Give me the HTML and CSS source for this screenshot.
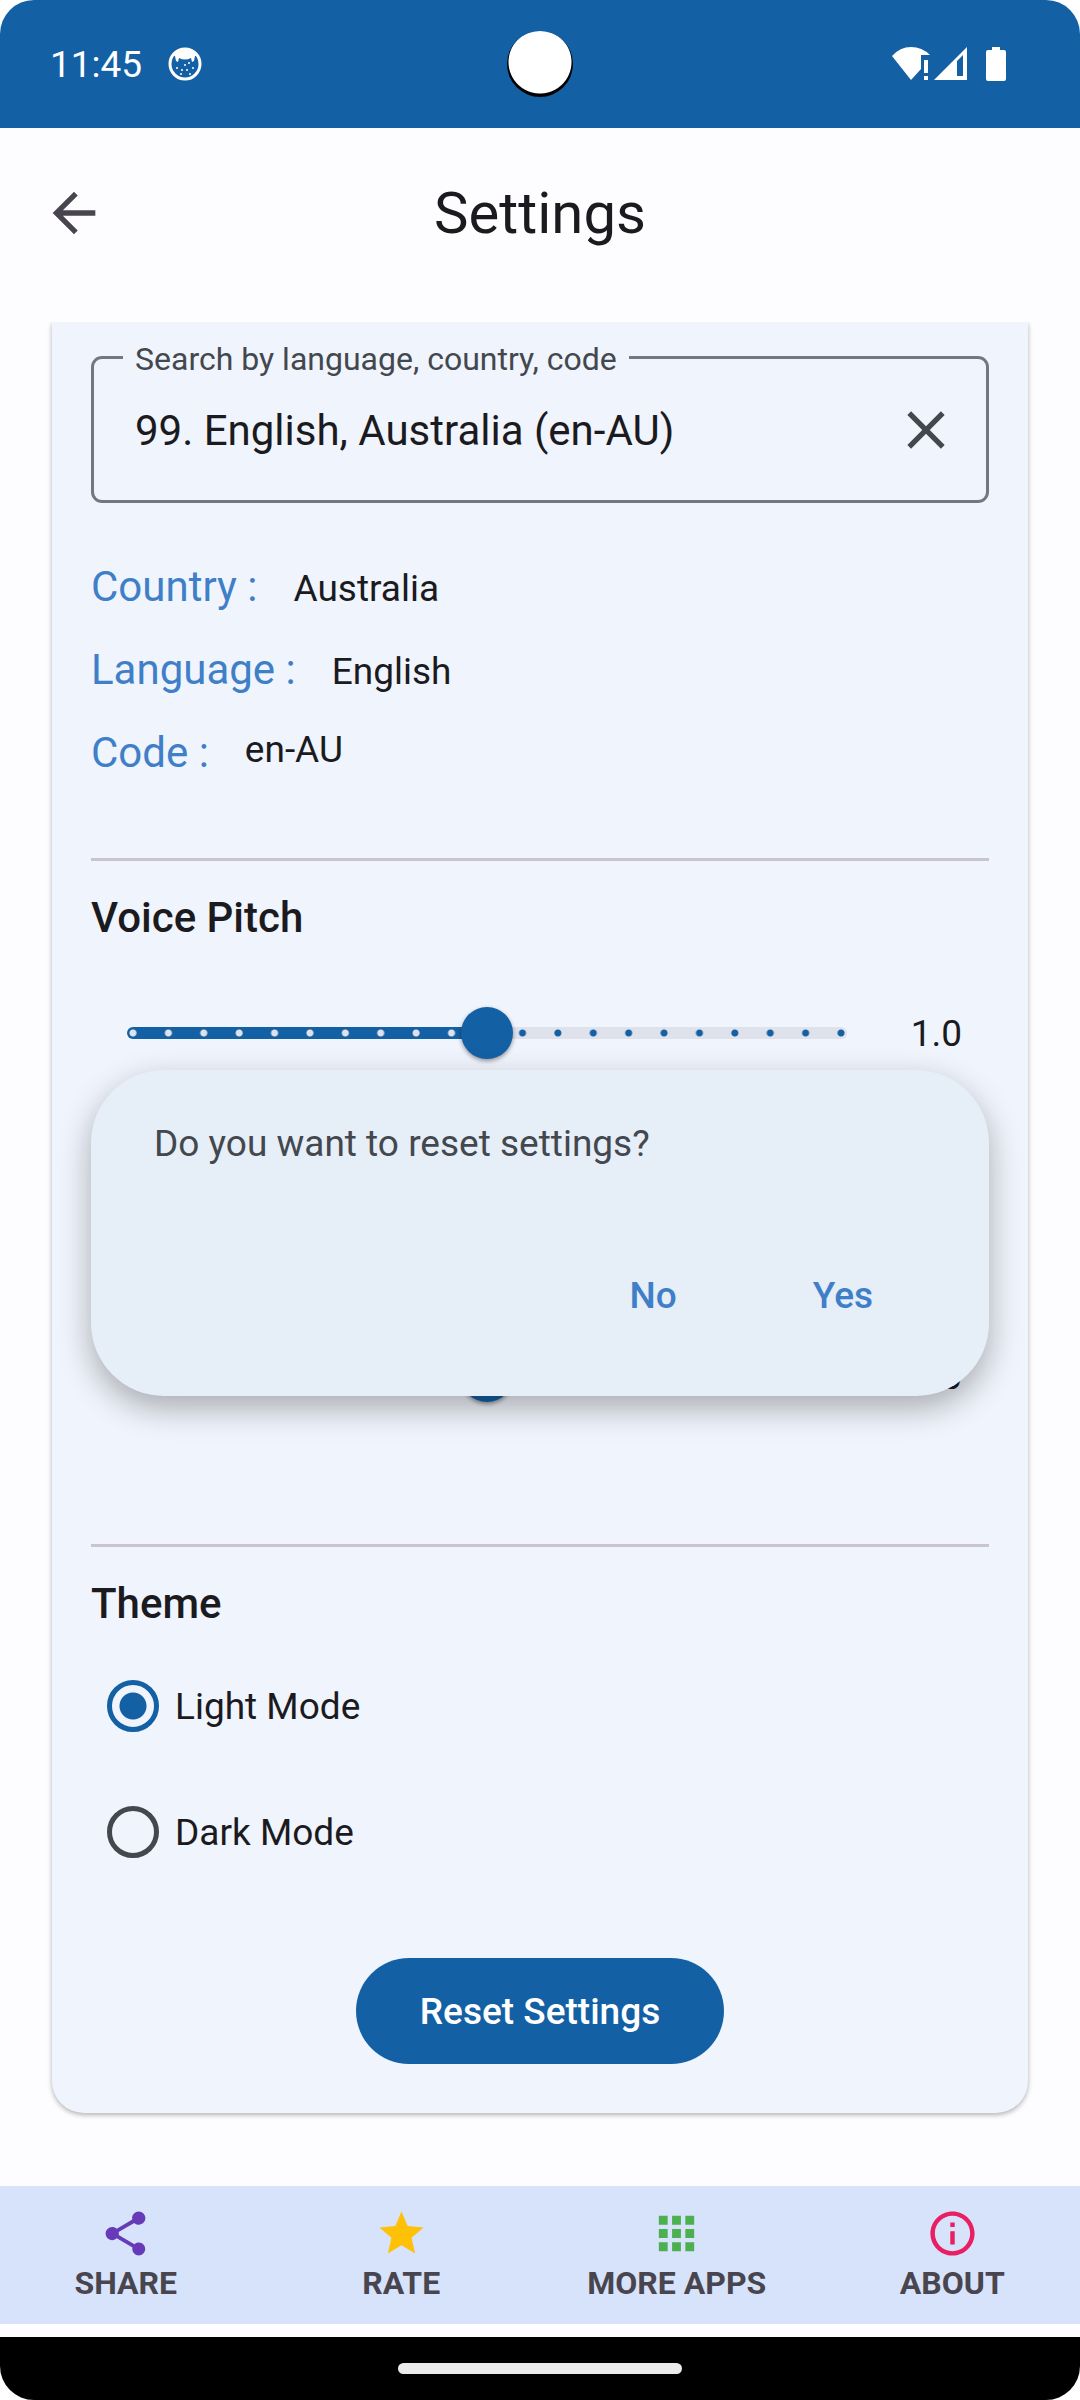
FILE: index.html
```html
<!DOCTYPE html>
<html lang="en">
<head>
  <meta charset="UTF-8" />
  <meta name="viewport" content="width=device-width, initial-scale=1.0" />
  <title>Settings</title>
  <link rel="stylesheet" href="styles.css">
</head>
<body>
  <div class="screen">
    <div class="status-bar">
      <div class="status-left">
        <span>11:45</span>
        <svg class="cat-icon" viewBox="0 0 34 34" aria-hidden="true">
          <circle cx="17" cy="17" r="15" fill="none" stroke="#fff" stroke-width="3"/>
          <path d="M4 8Q9 1 17 1T30 8L27 9 26 14 24 15 23 11Q17 14 11 11L10 15 8 14 7 9z" fill="#fff"/>
          <g fill="#fff">
            <circle cx="9" cy="21" r="1"/><circle cx="14" cy="23" r="1"/><circle cx="19" cy="23" r="1"/>
            <circle cx="25" cy="21" r="1"/><circle cx="17" cy="18" r="1"/><circle cx="22" cy="27" r="1"/>
            <circle cx="13" cy="27" r="1"/><circle cx="21" cy="16" r="1"/>
          </g>
        </svg>
      </div>
      <div class="camera"></div>
      <div class="status-right">
        <svg class="status-icons" viewBox="0 0 114 34" fill="#fff" aria-hidden="true">
          <path d="M19 33L0 9Q8 0 19 0T38 8H29V22z"/>
          <path d="M32 13h4v13h-4zM32 29h4v4h-4z"/>
          <path fill-rule="evenodd" d="M42 33L75 0V33zM65 14V29H71V8z"/>
          <path d="M100 0h8v3h4q2 0 2 2v27q0 2-2 2H96q-2 0-2-2V5q0-2 2-2h4z"/>
        </svg>
      </div>
    </div>

    <div class="app">
      <header class="app-bar">
        <button class="icon-btn" type="button" aria-label="Back">
          <svg viewBox="0 0 24 24" fill="#49454f"><path d="M20 11H7.83l5.59-5.59L12 4l-8 8 8 8 1.41-1.41L7.83 13H20z"/></svg>
        </button>
        <h1>Settings</h1>
      </header>

      <main class="content">
        <div class="card">
          <fieldset class="search-field">
            <legend><label for="search">Search by language, country, code</label></legend>
            <div class="search-row">
              <input type="text" id="search" value="99. English, Australia (en-AU)">
              <button class="icon-btn" type="button" aria-label="Clear">
                <svg viewBox="0 0 24 24" fill="#43474e"><path d="M19 6.41L17.59 5 12 10.59 6.41 5 5 6.41 10.59 12 5 17.59 6.41 19 12 13.41 17.59 19 19 17.59 13.41 12z"/></svg>
              </button>
            </div>
          </fieldset>

          <dl class="details">
            <div class="detail"><dt>Country :</dt><dd>Australia</dd></div>
            <div class="detail"><dt>Language :</dt><dd>English</dd></div>
            <div class="detail detail-top"><dt>Code :</dt><dd>en-AU</dd></div>
          </dl>

          <section class="section">
            <h2><label for="pitch">Voice Pitch</label></h2>
            <div class="slider-row">
              <div class="slider"><input type="range" id="pitch" min="0" max="2" step="0.1" value="1"></div>
              <output for="pitch">1.0</output>
            </div>
          </section>

          <section class="section">
            <h2><label for="speed">Voice Speed</label></h2>
            <div class="slider-row">
              <div class="slider"><input type="range" id="speed" min="0" max="2" step="0.1" value="1"></div>
              <output for="speed">1.0</output>
            </div>
          </section>

          <section class="section theme">
            <h2>Theme</h2>
            <label class="radio"><input type="radio" name="theme" checked> Light Mode</label>
            <label class="radio"><input type="radio" name="theme"> Dark Mode</label>
          </section>

          <button class="reset-btn" type="button">Reset Settings</button>
        </div>
      </main>

      <nav class="bottom-nav">
        <a href="#">
          <svg viewBox="0 0 24 24" fill="#673ab7"><path d="M18 16.08c-.76 0-1.44.3-1.96.77L8.91 12.7c.05-.23.09-.46.09-.7s-.04-.47-.09-.7l7.05-4.11c.54.5 1.25.81 2.04.81 1.66 0 3-1.34 3-3s-1.34-3-3-3-3 1.34-3 3c0 .24.04.47.09.7L8.04 9.81C7.5 9.31 6.79 9 6 9c-1.66 0-3 1.34-3 3s1.34 3 3 3c.79 0 1.5-.31 2.04-.81l7.12 4.16c-.05.21-.08.43-.08.65 0 1.61 1.31 2.92 2.92 2.92s2.92-1.31 2.92-2.92-1.31-2.92-2.92-2.92z"/></svg>
          SHARE
        </a>
        <a href="#">
          <svg viewBox="0 0 24 24" fill="#ffc107"><path d="M12 17.27L18.18 21l-1.64-7.03L22 9.24l-7.19-.61L12 2 9.19 8.63 2 9.24l5.46 4.73L5.82 21z"/></svg>
          RATE
        </a>
        <a href="#">
          <svg viewBox="0 0 24 24" fill="#4caf50"><path d="M4 8h4V4H4v4zm6 12h4v-4h-4v4zm-6 0h4v-4H4v4zm0-6h4v-4H4v4zm6 0h4v-4h-4v4zm6-10v4h4V4h-4zm-6 4h4V4h-4v4zm6 6h4v-4h-4v4zm0 6h4v-4h-4v4z"/></svg>
          MORE APPS
        </a>
        <a href="#">
          <svg viewBox="0 0 24 24" fill="#e91e63"><path d="M11 7h2v2h-2zm0 4h2v6h-2zm1-9C6.48 2 2 6.48 2 12s4.48 10 10 10 10-4.48 10-10S17.52 2 12 2zm0 18c-4.41 0-8-3.59-8-8s3.59-8 8-8 8 3.59 8 8-3.59 8-8 8z"/></svg>
          ABOUT
        </a>
      </nav>

      <div class="overlay">
        <div class="dialog" role="alertdialog" aria-labelledby="dialogText">
          <p id="dialogText">Do you want to reset settings?</p>
          <div class="dialog-actions">
            <button type="button">No</button>
            <button type="button">Yes</button>
          </div>
        </div>
      </div>
    </div>

    <div class="gesture-bar"><span class="pill"></span></div>
  </div>
</body>
</html>
```
FILE: styles.css
```css
:root {
  --primary: #1460a5;
  --link: #3f7fc8;
  --bg: #fdfdff;
  --card-bg: #f0f4fc;
  --dialog-bg: #e6eef8;
  --nav-bg: #d7e3fa;
  --track: #dfe2eb;
  --text: #1b1b1f;
  --text-muted: #43474e;
  --outline: #74777f;
  --divider: #cac4d0;
}
* {
  box-sizing: border-box;
  margin: 0;
  padding: 0;
  font-family: Roboto, sans-serif;
}
body {
  background: #fff;
  color: var(--text);
  font-size: 37px;
  line-height: 43px;
}
button, input {
  font-size: inherit;
  line-height: inherit;
  color: inherit;
  border: none;
  background: none;
}
button {
  cursor: pointer;
}
.screen {
  display: flex;
  flex-direction: column;
  min-height: 100vh;
  border-radius: 34px;
  overflow: hidden;
}

/* status bar */
.status-bar {
  display: grid;
  grid-template-columns: 1fr auto 1fr;
  align-items: center;
  height: 128px;
  padding: 0 50px;
  background: var(--primary);
  color: #fff;
}
.status-left {
  display: flex;
  align-items: center;
  gap: 26px;
}
.status-right {
  display: flex;
  justify-content: flex-end;
  padding-right: 24px;
}
.cat-icon {
  width: 34px;
  height: 34px;
}
.camera {
  width: 66px;
  height: 66px;
  border-radius: 50%;
  background: radial-gradient(circle at 33px 31px, #fff 31px, #000 32px);
}
.status-icons {
  width: 114px;
  height: 34px;
}

/* app */
.app {
  position: relative;
  flex: 1;
  display: flex;
  flex-direction: column;
  padding-bottom: 13px;
  background: var(--bg);
}
.app-bar {
  display: grid;
  grid-template-columns: 64px 1fr 64px;
  align-items: center;
  height: 168px;
  margin-bottom: 26px;
  padding: 2px 42px 0;
}
.app-bar h1 {
  font-size: 58px;
  font-weight: 400;
  line-height: 72px;
  text-align: center;
}
.icon-btn {
  flex: none;
  width: 64px;
  height: 64px;
}
.icon-btn svg {
  display: block;
  width: 64px;
  height: 64px;
}
.content {
  flex: 1;
  padding: 0 52px 73px;
  overflow: hidden;
}
.card {
  display: flex;
  flex-direction: column;
  padding: 15px 39px 49px;
  border-radius: 0 0 32px 32px;
  background: var(--card-bg);
  box-shadow: 0 2px 5px rgba(0, 0, 0, 0.3);
}

/* search */
.search-field {
  min-width: 0;
  padding: 20px 28px 38px 29px;
  border: 3px solid var(--outline);
  border-radius: 11px;
}
.search-field legend {
  padding: 4px 12px 0;
  font-size: 32px;
  line-height: 37px;
  color: var(--text-muted);
}
.search-row {
  display: flex;
  align-items: center;
  padding-left: 12px;
}
.search-row input {
  flex: 1;
  min-width: 0;
  padding-top: 2px;
  font-size: 42px;
  line-height: 50px;
  outline: none;
}

.details {
  display: flex;
  flex-direction: column;
  gap: 33px;
  margin: 59px 0 80px;
}
.detail {
  display: flex;
  align-items: baseline;
  gap: 36px;
}
.detail-top {
  align-items: flex-start;
}
.detail dt {
  font-size: 42px;
  line-height: 50px;
  color: var(--link);
}

/* sections */
.section {
  padding: 32px 0 142px;
  border-top: 3px solid var(--divider);
}
.section h2 {
  font-size: 42px;
  font-weight: 500;
  line-height: 50px;
}
.slider-row {
  display: flex;
  align-items: center;
  margin-top: 64px;
  padding: 0 27px 0 16px;
}
.slider-row output {
  width: 95px;
  text-align: right;
}
.slider {
  position: relative;
  flex: 1;
  height: 52px;
}
/* filled and empty halves of the track, with tick dots */
.slider::before,
.slider::after {
  content: "";
  position: absolute;
  top: 20px;
  height: 12px;
  background-size: calc((100% - 6px) / 10) 100%;
}
.slider::before {
  left: 20px;
  right: 50%;
  border-radius: 6px 0 0 6px;
  background-color: var(--primary);
  background-image: radial-gradient(circle at 6px 6px, var(--track) 3px, transparent 4px);
}
.slider::after {
  left: 50%;
  right: 20px;
  border-radius: 0 6px 6px 0;
  background-color: var(--track);
  background-image: radial-gradient(circle at calc(100% - 6px) 6px, var(--primary) 3px, transparent 4px);
  background-position: right;
}
.slider input {
  position: relative;
  z-index: 1;
  display: block;
  width: 100%;
  height: 52px;
  appearance: none;
  -webkit-appearance: none;
}
.slider input::-webkit-slider-thumb {
  -webkit-appearance: none;
  width: 52px;
  height: 52px;
  border-radius: 50%;
  background: var(--primary);
  box-shadow: 0 2px 4px rgba(0, 0, 0, 0.4);
}

.theme {
  padding-bottom: 63px;
}
.theme h2 {
  margin-bottom: 14px;
}
.radio {
  display: flex;
  align-items: center;
  gap: 16px;
  height: 126px;
  padding-left: 16px;
}
.radio input {
  width: 52px;
  height: 52px;
  appearance: none;
  -webkit-appearance: none;
  border: 5px solid var(--text-muted);
  border-radius: 50%;
}
.radio input:checked {
  border-color: var(--primary);
  background: radial-gradient(circle, var(--primary) 13px, transparent 14px);
}
.reset-btn {
  align-self: center;
  height: 106px;
  padding: 0 64px;
  border-radius: 53px;
  background: var(--primary);
  color: #fff;
  font-weight: 500;
}

/* bottom nav */
.bottom-nav {
  display: grid;
  grid-template-columns: repeat(4, 1fr);
  column-gap: 24px;
  padding: 21px 2px 22px 0;
  background: var(--nav-bg);
}
.bottom-nav a {
  display: flex;
  flex-direction: column;
  align-items: center;
  gap: 4px;
  font-size: 32px;
  font-weight: 700;
  line-height: 38px;
  color: #49454f;
  text-decoration: none;
  white-space: nowrap;
}
.bottom-nav svg {
  width: 53px;
  height: 53px;
}

/* reset dialog */
.overlay {
  position: absolute;
  inset: 0;
  z-index: 2;
  display: flex;
  align-items: center;
  padding: 0 91px;
}
.dialog {
  flex: 1;
  padding: 52px 63px 48px;
  border-radius: 73px;
  background: var(--dialog-bg);
  box-shadow: 0 12px 32px rgba(0, 0, 0, 0.3);
  color: var(--text-muted);
}
.dialog-actions {
  display: flex;
  justify-content: flex-end;
  gap: 52px;
  margin-top: 78px;
  padding-right: 11px;
}
.dialog-actions button {
  height: 105px;
  padding: 0 42px;
  font-weight: 500;
  color: var(--link);
}

.gesture-bar {
  display: flex;
  justify-content: center;
  align-items: center;
  height: 63px;
  background: #000;
}
.pill {
  width: 284px;
  height: 11px;
  border-radius: 6px;
  background: #ececec;
}
```
